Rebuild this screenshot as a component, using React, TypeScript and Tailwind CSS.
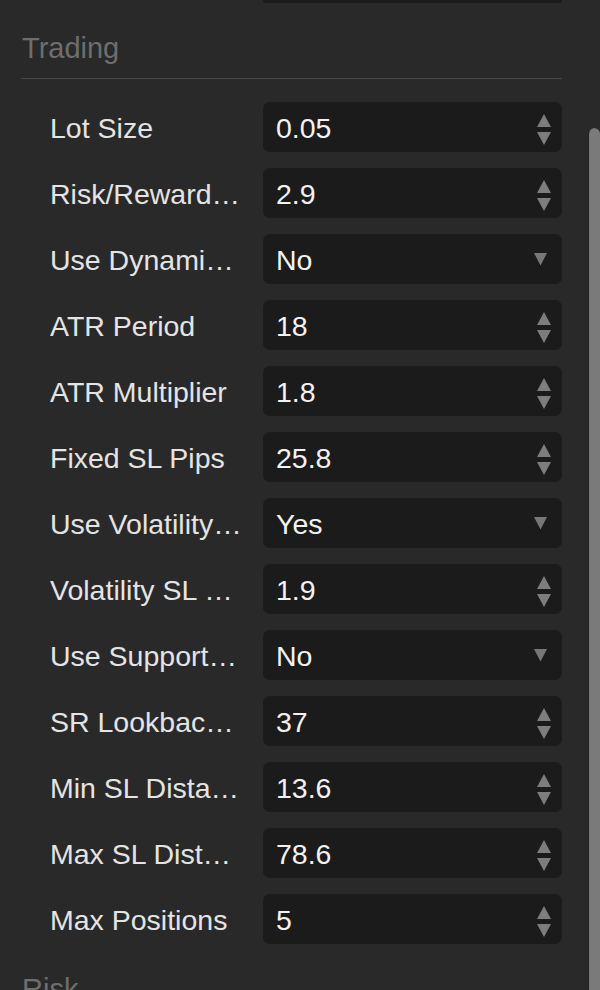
import { ReactNode } from 'react';

type Field =
  | { label: string; kind: 'number'; value: string }
  | { label: string; kind: 'select'; value: string };

const trading: Field[] = [
  { label: 'Lot Size', kind: 'number', value: '0.05' },
  { label: 'Risk/Reward Ratio', kind: 'number', value: '2.9' },
  { label: 'Use Dynamic SL', kind: 'select', value: 'No' },
  { label: 'ATR Period', kind: 'number', value: '18' },
  { label: 'ATR Multiplier', kind: 'number', value: '1.8' },
  { label: 'Fixed SL Pips', kind: 'number', value: '25.8' },
  { label: 'Use Volatility SL', kind: 'select', value: 'Yes' },
  { label: 'Volatility SL Multiplier', kind: 'number', value: '1.9' },
  { label: 'Use Support/Resistance', kind: 'select', value: 'No' },
  { label: 'SR Lookback Period', kind: 'number', value: '37' },
  { label: 'Min SL Distance Pips', kind: 'number', value: '13.6' },
  { label: 'Max SL Distance Pips', kind: 'number', value: '78.6' },
  { label: 'Max Positions', kind: 'number', value: '5' },
];

const risk: Field[] = [
  { label: 'Max Daily Loss', kind: 'number', value: '3.0' },
  { label: 'Max Drawdown', kind: 'number', value: '12.0' },
];

function Spinner() {
  return (
    <svg width="16" height="38" viewBox="0 0 16 38" className="shrink-0">
      <path d="M8 6 L15 19 L1 19 Z" fill="#7d7d7d" />
      <path d="M1 24 L15 24 L8 37 Z" fill="#7d7d7d" />
    </svg>
  );
}

function Caret() {
  return (
    <svg width="15" height="14" viewBox="0 0 15 14" className="shrink-0 mr-[4px]">
      <path d="M1 1 L14 1 L7.5 13.5 Z" fill="#777777" />
    </svg>
  );
}

function Row({ field }: { field: Field }) {
  return (
    <div className="grid grid-cols-[194px_1fr] gap-x-[19px] items-center h-[50px]">
      <span className="truncate text-[#e4e4e4] pt-[2px]">{field.label}</span>
      <div className="h-[50px] flex items-center justify-between bg-[#1b1b1b] rounded-[7px] pl-[13px] pr-[10px]">
        <span className="text-[#f2f2f2] pt-[2px]">{field.value}</span>
        {field.kind === 'number' ? <Spinner /> : <Caret />}
      </div>
    </div>
  );
}

function Section({ title, fields }: { title: string; fields: Field[] }): ReactNode {
  return (
    <section className="mt-[29px]">
      <div className="pl-[22px]">
        <h3 className="text-[#6e6e6e] text-[29px] leading-[33px]">{title}</h3>
        <div className="mt-[13px] h-px bg-[#484848] -ml-[1px]" />
      </div>
      <div className="mt-[23px] pl-[50px] flex flex-col gap-[16px]">
        {fields.map((f) => (
          <Row key={f.label} field={f} />
        ))}
      </div>
    </section>
  );
}

export default function App() {
  return (
    <div
      className="h-[990px] w-[600px] overflow-hidden bg-[#292929] flex text-[28.5px]"
      style={{ fontFamily: '"Liberation Sans", Arial, sans-serif' }}
    >
      <div className="flex-1 pr-[26px]">
        {/* tail of the previous section's last input */}
        <div className="pl-[50px] grid grid-cols-[194px_1fr] gap-x-[19px]">
          <div />
          <div className="h-[3px] bg-[#1b1b1b] rounded-b-[3px]" />
        </div>
        <Section title="Trading" fields={trading} />
        <Section title="Risk" fields={risk} />
      </div>
      {/* scrollbar */}
      <div className="w-[12px] pt-[128px] shrink-0">
        <div className="h-full bg-[#7a7a7a] rounded-t-[6px] border-l border-[#202020]" />
      </div>
    </div>
  );
}
